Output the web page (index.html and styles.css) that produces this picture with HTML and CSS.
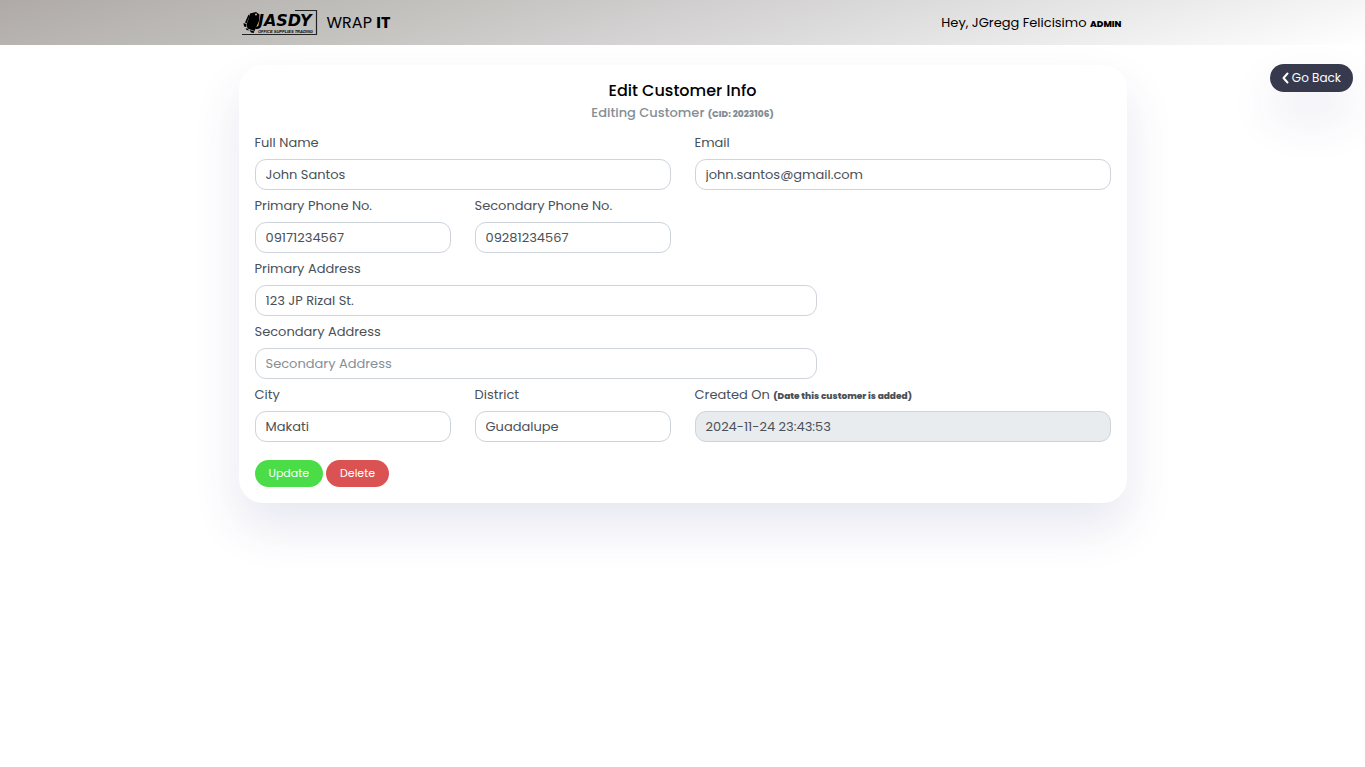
FILE: index.html
```html
<!DOCTYPE html>
<html lang="en">
<head>
<meta charset="utf-8">
<title>Wrap It - Edit Customer</title>
<link rel="stylesheet" href="styles.css">
</head>
<body>
<header class="topbar">
  <div class="topbar-inner">
    <a class="brand" href="#">
      <svg class="logo" viewBox="0 0 76 28" role="img" aria-label="Jasdy Office Supplies Trading">
        <path d="M53 1.500H74.500V25.500H0" fill="none" stroke="#222" stroke-width="1.200"/>
        <path d="M8 4.500L14 3L17.500 5.500L17 12L12.500 22L5.500 19.500L4.500 15.500L6.500 10Z" fill="#000"/>
        <path d="M6.500 5.500L3 13.500L4.500 14.500L7.500 7ZM1.500 14L4 15L4.500 18L2 17.500ZM3.500 19L6 20L7 21.500L4.500 21ZM7.500 21L12.500 22.500L11.500 24L9 23.500Z" fill="#000"/>
        <circle cx="14" cy="5.500" r="1" fill="#bbb"/>
        <text class="logo-name" x="16" y="17">JASDY</text>
        <text class="logo-tag" x="16" y="24">OFFICE SUPPLIES TRADING</text>
      </svg>
      <span class="brand-name">WRAP <b>IT</b></span>
    </a>
    <span class="greeting">Hey, JGregg Felicisimo <b class="tiny">ADMIN</b></span>
  </div>
</header>
<main class="page">
  <a class="btn btn-dark back" href="#">
    <svg class="chevron" viewBox="0 0 7 12" aria-hidden="true"><path d="M5.500 1.500L1.500 6L5.500 10.500" fill="none" stroke="currentColor" stroke-width="2" stroke-linecap="round" stroke-linejoin="round"/></svg>
    Go Back
  </a>
  <form class="card">
    <h1 class="title">Edit Customer Info</h1>
    <p class="subtitle">Editing Customer <b class="tiny">(CID: 2023106)</b></p>
    <div class="fields">
      <div class="field half"><label for="name">Full Name</label><input id="name" type="text" value="John Santos"></div>
      <div class="field half"><label for="email">Email</label><input id="email" type="email" value="john.santos@gmail.com"></div>
      <div class="field quarter"><label for="phone1">Primary Phone No.</label><input id="phone1" type="text" value="09171234567"></div>
      <div class="field quarter"><label for="phone2">Secondary Phone No.</label><input id="phone2" type="text" value="09281234567"></div>
      <div class="field wide"><label for="addr1">Primary Address</label><input id="addr1" type="text" value="123 JP Rizal St."></div>
      <div class="field wide"><label for="addr2">Secondary Address</label><input id="addr2" type="text" placeholder="Secondary Address"></div>
      <div class="field quarter line-start"><label for="city">City</label><input id="city" type="text" value="Makati"></div>
      <div class="field quarter"><label for="district">District</label><input id="district" type="text" value="Guadalupe"></div>
      <div class="field half"><label for="created">Created On <b class="tiny">(Date this customer is added)</b></label><input id="created" type="text" value="2024-11-24 23:43:53" disabled></div>
    </div>
    <div class="actions">
      <button class="btn btn-update" type="submit">Update</button>
      <button class="btn btn-delete" type="button">Delete</button>
    </div>
  </form>
</main>
</body>
</html>
```
FILE: styles.css
```css
* { box-sizing: border-box; }
body {
  display: flex;
  flex-direction: column;
  min-height: 100vh;
  margin: 0;
  background: #fff;
  color: #000;
  font-family: Poppins, Inter, "Open Sans", sans-serif;
  font-size: 13px;
  line-height: 20px;
}
.topbar {
  background: linear-gradient(165deg, #afaaa8 0%, #c3c2be 30%, #d4d2d3 50%, #e2e2e2 68%, #fff 100%);
}
.topbar-inner {
  display: flex;
  align-items: center;
  justify-content: space-between;
  max-width: 882px;
  min-height: 45px;
  margin: 0 auto;
  padding-right: 2px;
}
.brand {
  display: flex;
  align-items: center;
  gap: 9px;
  color: #000;
  text-decoration: none;
}
.logo { width: 76px; height: 28px; }
.logo-name {
  font: italic 700 16px "DejaVu Sans", sans-serif;
}
.logo-tag {
  font: italic 700 4px "Liberation Sans", sans-serif;
}
.brand-name { font-size: 16px; }
.tiny {
  font-size: 9px;
  font-weight: 800;
  line-height: 1;
}
.page {
  position: relative;
  flex: 1;
  padding: 20px 12px;
}
.card {
  max-width: 888px;
  margin: 0 auto;
  padding: 16px;
  border-radius: 24px;
  background: #fff;
  box-shadow: 0 24px 48px rgba(60, 60, 150, .12);
}
.title {
  margin: 0;
  font-size: 16px;
  font-weight: 500;
  line-height: 20px;
  text-align: center;
}
.subtitle {
  margin: 1px 0 9px;
  color: #868e96;
  font-weight: 500;
  line-height: 22px;
  text-align: center;
}
.fields {
  display: grid;
  grid-template-columns: repeat(12, 1fr);
  gap: 6px 24px;
}
.field {
  display: flex;
  flex-direction: column;
  gap: 6px;
  color: #495057;
}
.half { grid-column: span 6; }
.quarter { grid-column: span 3; }
.wide { grid-column: 1 / span 8; }
.line-start { grid-column: 1 / span 3; }
.field input {
  width: 100%;
  height: 31px;
  padding: 0 10px;
  border: 1px solid #ced4da;
  border-radius: 11px;
  background: #fff;
  color: #495057;
  font: inherit;
}
.field input::placeholder { color: #868e96; }
.field input:disabled { background: #e9ecef; }
.actions {
  display: flex;
  gap: 3px;
  margin-top: 18px;
}
.btn {
  padding: 4px 14px;
  border: 0;
  border-radius: 14px;
  color: #fff;
  font-family: inherit;
  font-size: 11px;
  line-height: 19px;
  text-decoration: none;
}
.btn-update { background: #4bdd48; }
.btn-delete { background: #db5252; }
.btn-dark { background: #373a4d; }
.back {
  position: absolute;
  top: 19px;
  right: 12px;
  display: flex;
  align-items: center;
  gap: 3px;
  padding: 4px 12px;
  font-size: 12px;
  line-height: 20px;
  box-shadow: 0 24px 48px rgba(60, 60, 150, .12);
}
.chevron { width: 7px; height: 12px; }
```
